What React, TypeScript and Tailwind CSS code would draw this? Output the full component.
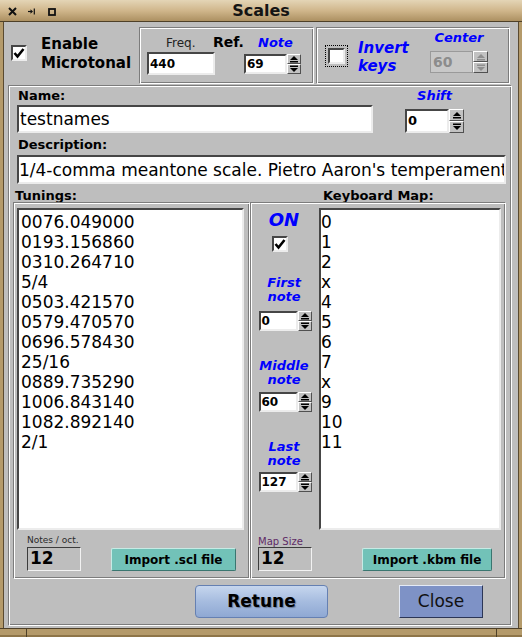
import React from 'react';

const engraved =
  'border border-t-[#7c7c7c] border-l-[#7c7c7c] border-b-white border-r-white shadow-[inset_1px_1px_0_#ffffff,inset_-1px_-1px_0_#7c7c7c]';
const down =
  'bg-white border-2 border-t-[#464646] border-l-[#464646] border-b-[#ececec] border-r-[#ececec]';
const thin = 'border border-t-[#3c3c3c] border-l-[#3c3c3c] border-b-[#f2f2f2] border-r-[#f2f2f2]';
const teal =
  'bg-[#72c2b8] border border-t-[#c6ebe5] border-l-[#c6ebe5] border-b-[#3a7670] border-r-[#3a7670] rounded-[2px] text-[12px] font-bold flex items-center justify-center';
const blue = 'font-bold italic text-[#0000ff]';

const tunings = [
  '0076.049000',
  '0193.156860',
  '0310.264710',
  '5/4',
  '0503.421570',
  '0579.470570',
  '0696.578430',
  '25/16',
  '0889.735290',
  '1006.843140',
  '1082.892140',
  '2/1',
];
const keymap = ['0', '1', '2', 'x', '4', '5', '6', '7', 'x', '9', '10', '11'];

function Spin({ className, dim }: { className: string; dim?: boolean }) {
  const c = dim ? '#8e8e8e' : '#000';
  return (
    <div className={`flex flex-col ${className}`}>
      {[0, 1].map((i) => (
        <div
          key={i}
          className="flex-1 bg-[#c2c2c2] border border-t-white border-l-white border-b-[#505050] border-r-[#505050] flex items-center justify-center"
        >
          <svg width="10" height="8" viewBox="0 0 10 8">
            {i === 0 ? (
              <>
                <path d="M1 5 L5 1 L9 5Z" fill={c} />
                <rect x="1" y="6" width="8" height="1.5" fill={c} />
              </>
            ) : (
              <>
                <rect x="1" y="0.5" width="8" height="1.5" fill={c} />
                <path d="M1 3 L9 3 L5 7Z" fill={c} />
              </>
            )}
          </svg>
        </div>
      ))}
    </div>
  );
}

function Check({ className }: { className: string }) {
  return (
    <div
      className={`w-[16px] h-[16px] bg-white border-2 border-t-[#464646] border-l-[#464646] border-b-[#ececec] border-r-[#ececec] flex items-center justify-center ${className}`}
    >
      <svg width="12" height="12" viewBox="0 0 12 12">
        <path d="M1.5 6 L4.5 9.5 L10.5 2" fill="none" stroke="#000" strokeWidth="2.6" />
      </svg>
    </div>
  );
}

function NumBox({ value, className }: { value: string; className: string }) {
  return (
    <div className="flex">
      <div className={`${down} ${className} flex items-center pl-[1px] text-[12px] font-bold`}>{value}</div>
      <Spin className="w-[14px] h-[20px]" />
    </div>
  );
}

export default function App() {
  return (
    <div className="w-[522px] h-[637px] flex flex-col bg-[#b49a6a] font-['DejaVu_Sans',sans-serif] text-black overflow-hidden select-none">
      {/* title bar */}
      <div className="h-[22px] shrink-0 grid grid-cols-[60px_1fr_60px] items-center bg-gradient-to-b from-[#e4d5b6] via-[#cfb58a] to-[#a98d5e] shadow-[inset_0_-1px_0_#4e4028]">
        <div className="flex items-center mt-[1px]">
          <svg className="ml-[8px]" width="9" height="9" viewBox="0 0 9 9">
            <path d="M1 1L8 8M8 1L1 8" stroke="#111" strokeWidth="2" />
          </svg>
          <svg className="ml-[11px]" width="7" height="7" viewBox="0 0 7 7">
            <path d="M0 3.5H3.5" stroke="#111" strokeWidth="1.2" />
            <path d="M2.5 1.3L5 3.5L2.5 5.7Z" fill="#111" />
            <path d="M6.3 0.5V6.5" stroke="#111" strokeWidth="1.2" />
          </svg>
          <svg className="ml-[13px]" width="8" height="8" viewBox="0 0 8 8">
            <rect x="1" y="1" width="6" height="6" fill="none" stroke="#111" strokeWidth="1.8" />
          </svg>
        </div>
        <div className="text-center font-bold text-[16px] leading-[22px] text-[#141414]">Scales</div>
        <div />
      </div>

      <div className="flex h-[606px]">
        <div className="w-[3px]" />
        <div className="w-[516px] bg-[#bebebe] shadow-[inset_1px_0_0_#5a4a30,inset_-1px_0_0_#5a4a30]">
          {/* top row */}
          <div className="flex h-[63px]">
            <div className="w-[136px] flex items-start">
              <Check className="ml-[8px] mt-[23px]" />
              <div className="ml-[14px] mt-[13px] text-[15px] leading-[19px] font-bold">
                Enable
                <br />
                Microtonal
              </div>
            </div>

            <div className={`mt-[5px] w-[175px] h-[57px] ${engraved}`}>
              <div className="flex items-baseline mt-[6px] pl-[26px] leading-[16px]">
                <span className="w-[47px] text-[12px] text-[#222]">Freq.</span>
                <span className="w-[45px] text-[14px] font-bold">Ref.</span>
                <span className={`text-[13px] ${blue}`}>Note</span>
              </div>
              <div className="flex items-start mt-[1px] ml-[7px]">
                <div className={`w-[68px] h-[23px] ${down} flex items-center pl-[1px] text-[12px] font-bold`}>440</div>
                <div className="ml-[29px] mt-[2px]">
                  <NumBox value="69" className="w-[43px] h-[20px]" />
                </div>
              </div>
            </div>

            <div className={`ml-[2px] mt-[5px] w-[194px] h-[57px] ${engraved} flex items-start`}>
              <div className="ml-[8px] mt-[17px] w-[23px] h-[22px] border border-dotted border-black p-[2px]">
                <div className={`w-full h-full ${down}`} />
              </div>
              <div className={`ml-[10px] mt-[11px] w-[72px] text-[15px] leading-[18px] ${blue}`}>
                Invert
                <br />
                keys
              </div>
              <div className="mt-[3px] flex flex-col w-[58px]">
                <div className={`text-center text-[13px] leading-[14px] ${blue}`}>Center</div>
                <div className="mt-[6px] flex">
                  <div className="w-[43px] h-[22px] bg-[#c8c8c8] border border-[#9a9a9a] flex items-center pl-[2px] text-[14px] font-bold text-[#8c8c8c]">
                    60
                  </div>
                  <Spin className="w-[15px] h-[22px]" dim />
                </div>
              </div>
            </div>
          </div>

          {/* main frame */}
          <div className={`ml-[5px] w-[504px] h-[541px] ${engraved} flex flex-col`}>
            <div className="flex">
              <div className="ml-[8px] flex flex-col">
                <div className="mt-[2px] pl-[1px] text-[13px] leading-[16px] font-bold">Name:</div>
                <div className={`mt-[1px] w-[356px] h-[28px] ${down} flex items-center pl-[1px] pt-[2px] text-[17px]`}>
                  testnames
                </div>
              </div>
              <div className="ml-[32px] flex flex-col items-center">
                <div className={`mt-[2px] text-[13px] leading-[16px] ${blue}`}>Shift</div>
                <div className="mt-[5px] flex">
                  <div className={`w-[44px] h-[24px] ${down} flex items-center pl-[1px] text-[13px] font-bold`}>0</div>
                  <Spin className="w-[15px] h-[24px]" />
                </div>
              </div>
            </div>

            <div className="ml-[9px] mt-[4px] text-[13px] leading-[16px] font-bold">Description:</div>
            <div
              className={`ml-[8px] mt-[2px] w-[489px] h-[29px] ${down} flex items-center pt-[2px] text-[17px] whitespace-nowrap overflow-hidden`}
            >
              1/4-comma meantone scale. Pietro Aaron's temperament
            </div>

            <div className="mt-[5px] ml-[6px] flex text-[13px] leading-[13px] font-bold">
              <span className="w-[308px]">Tunings:</span>
              <span>Keyboard Map:</span>
            </div>

            <div className="ml-[4px] flex">
              <div className={`w-[237px] h-[377px] ${engraved} flex flex-col`}>
                <div className={`ml-[3px] mt-[5px] w-[227px] h-[322px] ${down} pl-[2px] pt-[2px] text-[17px] leading-[20px]`}>
                  {tunings.map((t, i) => (
                    <div key={i}>{t}</div>
                  ))}
                </div>
                <div className="flex items-end ml-[13px]">
                  <div className="flex flex-col">
                    <div className="mt-[5px] text-[9px] leading-[11px] text-[#2a2a2a]">Notes / oct.</div>
                    <div className={`mt-[1px] w-[54px] h-[24px] ${thin} flex items-center pl-[2px] text-[17px] font-bold`}>
                      12
                    </div>
                  </div>
                  <div className={`ml-[30px] w-[125px] h-[23px] ${teal}`}>Import .scl file</div>
                </div>
              </div>

              <div className={`w-[256px] h-[377px] ${engraved} flex flex-col`}>
                <div className="flex">
                  <div className="w-[66px] flex flex-col items-center">
                    <div className={`mt-[7px] text-[18px] leading-[20px] ${blue}`}>ON</div>
                    <Check className="mt-[6px] self-start ml-[21px]" />
                    <div className={`mt-[24px] text-center text-[13px] leading-[14px] ${blue}`}>
                      First
                      <br />
                      note
                    </div>
                    <div className="mt-[7px] ml-[2px]">
                      <NumBox value="0" className="w-[39px] h-[20px]" />
                    </div>
                    <div className={`mt-[28px] text-center text-[13px] leading-[14px] ${blue}`}>
                      Middle
                      <br />
                      note
                    </div>
                    <div className="mt-[5px] ml-[2px]">
                      <NumBox value="60" className="w-[39px] h-[20px]" />
                    </div>
                    <div className={`mt-[28px] text-center text-[13px] leading-[14px] ${blue}`}>
                      Last
                      <br />
                      note
                    </div>
                    <div className="mt-[4px] ml-[2px]">
                      <NumBox value="127" className="w-[39px] h-[20px]" />
                    </div>
                  </div>
                  <div className={`ml-[2px] mt-[5px] w-[182px] h-[322px] ${down} pt-[2px] text-[17px] leading-[20px]`}>
                    {keymap.map((k, i) => (
                      <div key={i}>{k}</div>
                    ))}
                  </div>
                </div>
                <div className="flex items-end ml-[7px]">
                  <div className="flex flex-col">
                    <div className="mt-[6px] text-[10px] leading-[11px] text-[#5e2a66]">Map Size</div>
                    <div className={`w-[54px] h-[24px] ${thin} flex items-center pl-[2px] text-[17px] font-bold`}>12</div>
                  </div>
                  <div className={`ml-[50px] w-[130px] h-[23px] ${teal}`}>Import .kbm file</div>
                </div>
              </div>
            </div>

            <div className="mt-[6px] flex">
              <div className="ml-[186px] w-[133px] h-[33px] rounded-[4px] border border-[#6580b2] bg-gradient-to-b from-[#c6d6ee] via-[#a6bcdf] to-[#8fa8d3] flex items-center justify-center text-[17px] font-bold [text-shadow:1px_1px_1px_rgba(40,50,70,0.45)]">
                Retune
              </div>
              <div className="ml-[71px] w-[84px] h-[33px] bg-[#7e92c6] border border-t-[#e4eaf6] border-l-[#e4eaf6] border-b-[#2c3656] border-r-[#2c3656] flex items-center justify-center text-[17px] text-[#111]">
                Close
              </div>
            </div>
          </div>
        </div>
        <div className="w-[3px]" />
      </div>

      <div className="h-[9px] flex border-t border-[#4e4028] shadow-[inset_0_-2px_0_#8e7548]">
        <div className="w-[27px] border-r border-[#4e4028]" />
        <div className="flex-1" />
        <div className="w-[26px] border-l border-[#4e4028]" />
      </div>
    </div>
  );
}
